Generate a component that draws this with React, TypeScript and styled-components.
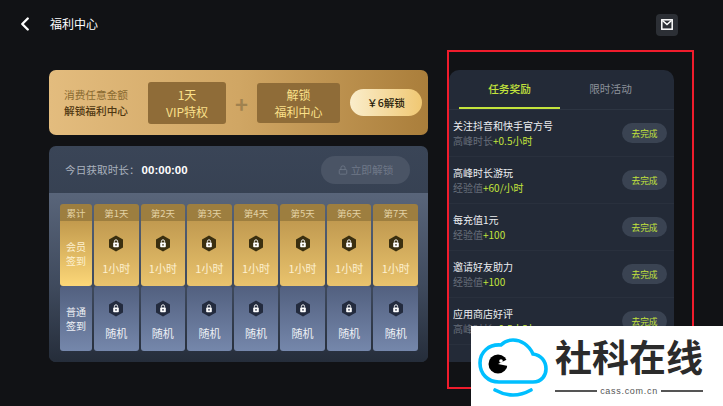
import React from 'react'
import styled, { createGlobalStyle } from 'styled-components'
import { Lock, ChevronLeft } from 'lucide-react'

const Global = createGlobalStyle`
  html, body { margin: 0; padding: 0; background: #111215; }
  * { box-sizing: border-box; }
`
const Page = styled.div`
  position: relative;
  width: 723px;
  height: 406px;
  overflow: hidden;
  background: #111215;
  font-family: "Noto Sans CJK SC", "Liberation Sans", sans-serif;
  color: #fff;
`
const Header = styled.header`
  display: flex;
  align-items: center;
  height: 47px;
  padding: 0 45px 0 14px;
`
const Back = styled.div`
  display: flex;
  width: 36px;
  color: #fff;
`
const Title = styled.div`
  flex: 1;
  font-size: 12px;
`
const MailBtn = styled.div`
  display: flex;
  align-items: center;
  justify-content: center;
  width: 22px;
  height: 22px;
  margin-top: 2px;
  border-radius: 4px;
  background: #2c2f35;
`
const Main = styled.main`
  display: flex;
  gap: 21px;
  padding: 23px 0 0 49px;
`
const Left = styled.div`
  display: flex;
  flex-direction: column;
  gap: 11px;
  width: 379px;
`
const Banner = styled.section`
  display: flex;
  align-items: center;
  height: 65px;
  padding: 0 6px 0 15px;
  border-radius: 7px;
  background: linear-gradient(90deg, #e3bc7e 0%, #d0a664 50%, #aa7e3b 100%);
`
const BannerText = styled.div`
  width: 84px;
  font-size: 10.67px;
  line-height: 16px;
  color: #8a6a30;
  strong { display: block; font-weight: 500; color: #4f3711; }
`
const Perk = styled.div<{ $w: number; $h: number }>`
  width: ${p => p.$w}px;
  height: ${p => p.$h}px;
  display: flex;
  flex-direction: column;
  align-items: center;
  justify-content: center;
  border-radius: 3px;
  background: #8f6c38;
  color: #fbe08a;
  font-size: 12px;
  line-height: 17px;
`
const Plus = styled.div`
  width: 31px;
  text-align: center;
  font-size: 22px;
  line-height: 22px;
  font-weight: 700;
  color: #a0824f;
`
const Pay = styled.div`
  margin-left: auto;
  width: 72px;
  height: 27px;
  display: flex;
  align-items: center;
  justify-content: center;
  border-radius: 14px;
  background: linear-gradient(90deg, #faedcb 0%, #f0c873 100%);
  color: #2b1f0c;
  font-size: 10.67px;
  font-weight: 500;
`
const Panel = styled.section`
  height: 216px;
  border-radius: 7px;
  overflow: hidden;
  background: linear-gradient(180deg, #3a4557 0%, #2c3544 100%);
`
const PanelTop = styled.div`
  display: flex;
  align-items: center;
  justify-content: space-between;
  height: 47px;
  padding: 0 18px 0 16px;
`
const Today = styled.div`
  font-size: 10.67px;
  color: #aab2be;
  b { margin-left: 2px; color: #fff; font-weight: 700; font-family: "Liberation Sans", sans-serif; font-size: 11.5px; }
`
const Unlock = styled.div`
  width: 89px;
  height: 28px;
  display: flex;
  align-items: center;
  justify-content: center;
  gap: 3px;
  border-radius: 14px;
  background: #4a5465;
  color: #6f7888;
  font-size: 10.67px;
`
const Board = styled.div`
  display: grid;
  grid-template-columns: 32px repeat(7, 1fr);
  gap: 2px;
  height: 169px;
  padding: 11px 10px 0 11px;
  background: linear-gradient(180deg, #59657a 0%, #3f4a5d 55%, #252d3a 100%);
`
const Col = styled.div`
  display: flex;
  flex-direction: column;
  height: 147px;
`
const Head = styled.div`
  height: 17px;
  display: flex;
  align-items: center;
  justify-content: center;
  border-radius: 3px 3px 0 0;
  background: #9d7e3f;
  color: #e3d2a4;
  font-size: 9.5px;
`
const Cell = styled.div<{ $kind: 'vip' | 'plain'; $side?: boolean }>`
  height: 65px;
  display: flex;
  flex-direction: column;
  align-items: center;
  justify-content: ${p => (p.$side ? 'center' : 'flex-start')};
  padding-top: ${p => (p.$side ? 0 : 14)}px;
  border-radius: ${p => (p.$kind === 'vip' ? '0 0 3px 3px' : '3px')};
  background: ${p =>
    p.$kind === 'vip'
      ? p.$side
        ? 'linear-gradient(180deg, #c29a4d 0%, #fcd778 100%)'
        : 'linear-gradient(180deg, #c19a50 0%, #e9c36d 100%)'
      : 'linear-gradient(180deg, #52607f 0%, #7587ab 100%)'};
  color: ${p => (p.$kind === 'vip' ? '#fdf0cf' : '#eef1f6')};
  font-size: ${p => (p.$side ? 10 : 11)}px;
  line-height: ${p => (p.$side ? 14 : 16)}px;
  text-align: center;
`
const Badge = styled.svg`
  display: block;
  margin-bottom: 8px;
`
const Tasks = styled.aside`
  width: 225px;
  height: 292px;
  border-radius: 10px 10px 0 0;
  overflow: hidden;
  background: #232a37;
`
const Tabs = styled.div`
  display: grid;
  grid-template-columns: 101px 101px;
  padding-left: 10px;
  height: 40px;
  border-bottom: 1px solid #2d3542;
`
const Tab = styled.div<{ $on?: boolean }>`
  display: flex;
  align-items: center;
  justify-content: center;
  height: 39px;
  font-size: 10.67px;
  font-weight: ${p => (p.$on ? 500 : 400)};
  color: ${p => (p.$on ? '#c4e43c' : '#8d929b')};
  border-bottom: 2px solid ${p => (p.$on ? '#c4e43c' : 'transparent')};
`
const Row = styled.div`
  display: flex;
  align-items: center;
  justify-content: space-between;
  height: 47px;
  padding: 0 7px 0 4px;
  border-bottom: 1px solid #29303d;
`
const RowTitle = styled.div`
  font-size: 10px;
  line-height: 15px;
  color: #eceef1;
`
const RowSub = styled.div`
  font-size: 10px;
  line-height: 15px;
  color: #666d79;
  span { color: #c4e43c; }
`
const Go = styled.div`
  width: 45px;
  height: 20px;
  display: flex;
  align-items: center;
  justify-content: center;
  border-radius: 10px;
  background: #3a4352;
  color: #c4e43c;
  font-size: 8.7px;
`
const RedFrame = styled.div`
  position: absolute;
  left: 447px;
  top: 50px;
  width: 247px;
  height: 339px;
  border: 2px solid #f01c2c;
  pointer-events: none;
`
const Mark = styled.div`
  position: absolute;
  left: 471px;
  top: 326px;
  width: 252px;
  height: 80px;
  background: #fff;
`
const MarkLogo = styled.svg`
  position: absolute;
  left: 0;
  top: 0;
`
const MarkName = styled.div`
  position: absolute;
  left: 84px;
  top: 8px;
  width: 150px;
  font-family: "Noto Sans CJK SC", sans-serif;
  font-size: 37px;
  line-height: 44px;
  font-weight: 700;
  white-space: nowrap;
  color: #2b2b2b;
`
const MarkSite = styled.div`
  position: absolute;
  left: 84px;
  top: 59px;
  width: 148px;
  display: flex;
  align-items: center;
  gap: 3px;
  font-family: "Liberation Sans", sans-serif;
  font-size: 9px;
  letter-spacing: 0.7px;
  line-height: 12px;
  color: #555;
  i { flex: 1; height: 2px; background: #555; }
`

function HexLock({ fill }: { fill: string }) {
  return (
    <Badge width="16" height="17" viewBox="0 0 16 17">
      <path d="M8 0.5 L15 4.5 V12.5 L8 16.5 L1 12.5 V4.5 Z" fill={fill} />
      <rect x="5.2" y="7.6" width="5.6" height="4.6" rx="0.8" fill="#fff" />
      <path d="M6.4 7.6 V6.4 A1.6 1.6 0 0 1 9.6 6.4 V7.6" fill="none" stroke="#fff" strokeWidth="0.9" />
      <circle cx="8" cy="9.9" r="0.8" fill={fill} />
    </Badge>
  )
}

const days = [1, 2, 3, 4, 5, 6, 7]
const tasks = [
  { title: '关注抖音和快手官方号', label: '高峰时长', bonus: '+0.5小时' },
  { title: '高峰时长游玩', label: '经验值', bonus: '+60/小时' },
  { title: '每充值1元', label: '经验值', bonus: '+100' },
  { title: '邀请好友助力', label: '经验值', bonus: '+100' },
  { title: '应用商店好评', label: '高峰时长', bonus: '+0.5小时' },
]

export default function App() {
  return (
    <Page>
      <Global />
      <Header>
        <Back><ChevronLeft size={22} strokeWidth={2.6} /></Back>
        <Title>福利中心</Title>
        <MailBtn>
          <svg width="12" height="11" viewBox="0 0 12 11" fill="none" stroke="#fff" strokeWidth="1.5">
            <rect x="0.8" y="0.8" width="10.4" height="9.4" />
            <path d="M1.5 1.5 L6 5.5 L10.5 1.5" />
            <circle cx="8.7" cy="7.9" r="0.7" fill="#2c2f35" stroke="none" />
          </svg>
        </MailBtn>
      </Header>
      <Main>
        <Left>
          <Banner>
            <BannerText>消费任意金额<strong>解锁福利中心</strong></BannerText>
            <Perk $w={78} $h={42}><span>1天</span><span>VIP特权</span></Perk>
            <Plus>+</Plus>
            <Perk $w={83} $h={40}><span>解锁</span><span>福利中心</span></Perk>
            <Pay>￥6解锁</Pay>
          </Banner>
          <Panel>
            <PanelTop>
              <Today>今日获取时长：<b>00:00:00</b></Today>
              <Unlock><Lock size={10} />立即解锁</Unlock>
            </PanelTop>
            <Board>
              <Col>
                <Head>累计</Head>
                <Cell $kind="vip" $side>会员<br />签到</Cell>
                <Cell $kind="plain" $side>普通<br />签到</Cell>
              </Col>
              {days.map(d => (
                <Col key={d}>
                  <Head>第{d}天</Head>
                  <Cell $kind="vip"><HexLock fill="#3a2f10" />1小时</Cell>
                  <Cell $kind="plain"><HexLock fill="#232b3e" />随机</Cell>
                </Col>
              ))}
            </Board>
          </Panel>
        </Left>
        <Tasks>
          <Tabs>
            <Tab $on>任务奖励</Tab>
            <Tab>限时活动</Tab>
          </Tabs>
          {tasks.map(t => (
            <Row key={t.title}>
              <div>
                <RowTitle>{t.title}</RowTitle>
                <RowSub>{t.label}<span>{t.bonus}</span></RowSub>
              </div>
              <Go>去完成</Go>
            </Row>
          ))}
        </Tasks>
      </Main>
      <RedFrame />
      <Mark>
        <MarkLogo width="84" height="80" viewBox="0 0 84 80">
          <path
            d="M28 56 H62 C71 56 75 49 75 43 C75 35 70 29 62 28 C58 19 50 14 42 14 C37 14 33 16 30 19 C18 18 9 26 9 37 C9 48 17 56 28 56 Z"
            fill="none"
            stroke="#00bfff"
            strokeWidth="3.6"
          />
          <path d="M24 64 Q42 74 60 64" fill="none" stroke="#00bfff" strokeWidth="3.6" strokeLinecap="round" />
          <circle cx="27" cy="38" r="9.5" fill="#000" />
          <path d="M27 38 L37 33 V40 Z" fill="#fff" />
          <circle cx="30" cy="35" r="1.8" fill="#fff" />
        </MarkLogo>
        <MarkName>社科在线</MarkName>
        <MarkSite><i />cass.com.cn<i /></MarkSite>
      </Mark>
    </Page>
  )
}
